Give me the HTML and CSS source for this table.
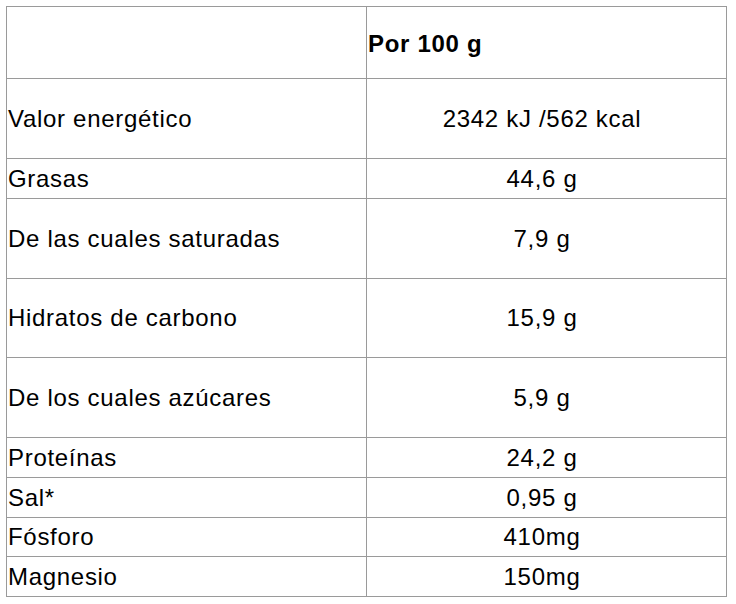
FILE: index.html
```html
<!DOCTYPE html>
<html lang="es">
<head>
<meta charset="utf-8">
<title>Información nutricional</title>
<link rel="stylesheet" href="styles.css">
</head>
<body>
<div class="page">
<table class="nutri">
  <tr class="r-head"><td></td><td class="head">Por 100 g</td></tr>
  <tr class="r-tall"><td>Valor energético</td><td class="val">2342 kJ /562 kcal</td></tr>
  <tr class="r-short"><td>Grasas</td><td class="val">44,6 g</td></tr>
  <tr class="r-tall"><td>De las cuales saturadas</td><td class="val">7,9 g</td></tr>
  <tr class="r-tall2"><td>Hidratos de carbono</td><td class="val">15,9 g</td></tr>
  <tr class="r-tall"><td>De los cuales azúcares</td><td class="val">5,9 g</td></tr>
  <tr class="r-short"><td>Proteínas</td><td class="val">24,2 g</td></tr>
  <tr class="r-short"><td>Sal*</td><td class="val">0,95 g</td></tr>
  <tr class="r-short2"><td>Fósforo</td><td class="val">410mg</td></tr>
  <tr class="r-short"><td>Magnesio</td><td class="val">150mg</td></tr>
</table>
</div>
</body>
</html>
```

FILE: styles.css
```css
html, body {
  margin: 0;
  padding: 0;
  background: #ffffff;
}
.page {
  padding: 6px 0 0 6px;
}
.nutri {
  border-collapse: collapse;
  width: 721px;
  table-layout: fixed;
  font-family: "Liberation Sans", Arial, sans-serif;
  font-size: 24px;
  letter-spacing: 0.7px;
  color: #000;
}
.nutri td {
  border: 1px solid #9a9a9a;
  padding: 0 0 0 1px;
  vertical-align: middle;
  width: 50%;
}
.r-head td { height: 68px; padding-top: 3px; }
.r-tall td { height: 79px; }
.r-tall2 td { height: 78px; }
.r-short td { height: 39px; }
.r-short2 td { height: 38px; }
.nutri td.head {
  font-weight: bold;
  text-align: left;
}
.nutri td.val {
  text-align: center;
  padding-right: 10px;
}
```
